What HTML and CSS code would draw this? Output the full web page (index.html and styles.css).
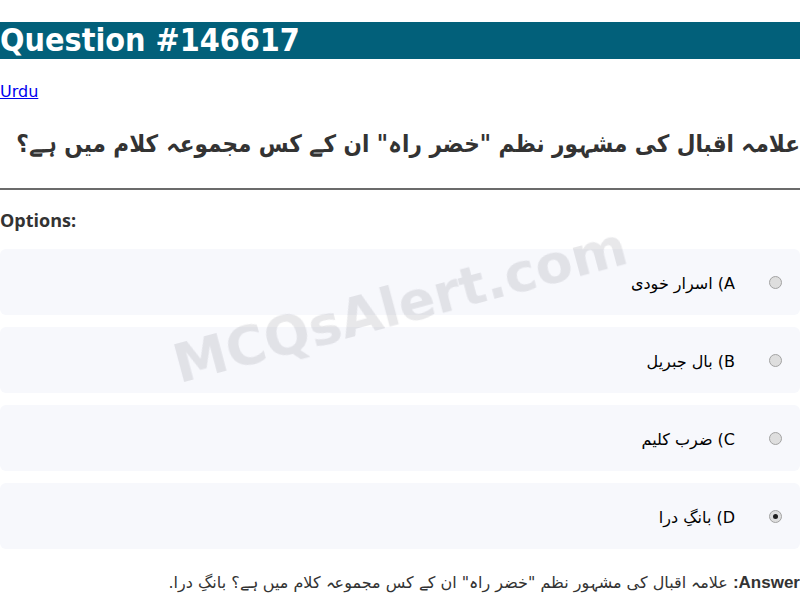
FILE: index.html
```html
<!DOCTYPE html>
<html lang="en">
<head>
<meta charset="utf-8">
<title>Question #146617</title>
<link rel="stylesheet" href="styles.css">
</head>
<body>
<h1 class="title">Question #146617</h1>
<div class="lang"><a href="#">Urdu</a></div>
<h2 class="question" dir="rtl">علامہ اقبال کی مشہور نظم "خضر راہ" ان کے کس مجموعہ کلام میں ہے؟</h2>
<hr class="rule">
<div class="options-label">Options:</div>
<div class="options" dir="rtl">
  <label class="option"><input type="radio" name="opt" class="radio"><span class="opt-text">A) اسرار خودی</span></label>
  <label class="option"><input type="radio" name="opt" class="radio"><span class="opt-text">B) بال جبریل</span></label>
  <label class="option"><input type="radio" name="opt" class="radio"><span class="opt-text">C) ضرب کلیم</span></label>
  <label class="option"><input type="radio" name="opt" class="radio" checked><span class="opt-text">D) بانگِ درا</span></label>
</div>
<p class="answer" dir="rtl"><b class="answer-label">Answer:</b> علامہ اقبال کی مشہور نظم "خضر راہ" ان کے کس مجموعہ کلام میں ہے؟ بانگِ درا.</p>
<div class="watermark">MCQsAlert.com</div>
</body>
</html>
```
FILE: styles.css
```css
html, body {
  margin: 0;
  padding: 0;
  background: #ffffff;
}
body {
  font-family: "DejaVu Sans", sans-serif;
  color: #000;
}
.title {
  margin: 22px 0 0;
  background: #02607a;
  color: #ffffff;
  font-family: "DejaVu Sans Condensed", "DejaVu Sans", sans-serif;
  font-size: 32px;
  font-weight: bold;
  line-height: 37px;
}
.lang {
  margin-top: 24px;
  font-size: 16px;
  line-height: 18px;
}
.lang a {
  color: #0000ee;
}
.question {
  margin: 28px 0 0;
  font-family: "DejaVu Sans Condensed", "DejaVu Sans", sans-serif;
  font-size: 24px;
  line-height: 30px;
  font-weight: bold;
  color: #333333;
  text-align: right;
}
.rule {
  margin: 29px 0 0;
  border: 0;
  border-top: 2px solid #6b6b6b;
  height: 0;
}
.options-label {
  margin-top: 18px;
  font-family: "Open Sans", sans-serif;
  font-weight: bold;
  font-size: 18px;
  line-height: 24px;
  color: #333333;
}
.options {
  margin-top: 17px;
  display: flex;
  flex-direction: column;
  gap: 12px;
}
.option {
  display: flex;
  align-items: center;
  height: 66px;
  background: #f7f8fc;
  border-radius: 6px;
  padding: 0 18px;
  box-sizing: border-box;
}
.radio {
  appearance: none;
  -webkit-appearance: none;
  margin: 0 0 0 34px;
  width: 13px;
  height: 13px;
  border-radius: 50%;
  border: 1px solid #a3a3a3;
  background: #dedede;
  box-sizing: border-box;
  display: grid;
  place-items: center;
}
.radio:checked::before {
  content: "";
  width: 5px;
  height: 5px;
  border-radius: 50%;
  background: #1e1e1e;
}
.opt-text {
  font-size: 16px;
  line-height: 20px;
  padding-top: 3px;
}
.answer {
  margin: 23px 0 0;
  font-family: "DejaVu Sans", sans-serif;
  font-size: 16px;
  line-height: 22px;
  color: #333333;
}
.answer-label {
  font-family: "Liberation Sans", sans-serif;
  font-size: 17px;
}
.watermark {
  position: fixed;
  left: 50%;
  top: 50%;
  transform: translate(-50%, -50%) rotate(-15deg);
  font-family: "DejaVu Sans", sans-serif;
  font-weight: bold;
  font-size: 54px;
  color: rgba(110, 110, 125, 0.16);
  white-space: nowrap;
  pointer-events: none;
}
```
